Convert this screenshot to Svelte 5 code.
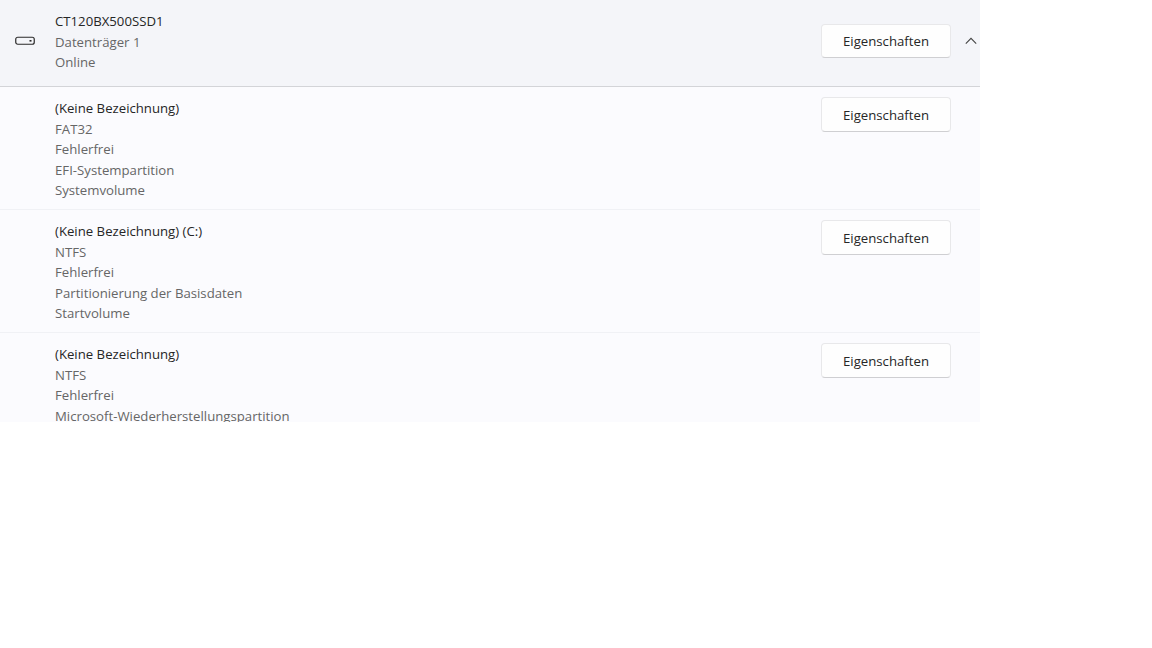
<script>
  const rows = [
    { title: '(Keine Bezeichnung)', lines: ['FAT32', 'Fehlerfrei', 'EFI-Systempartition', 'Systemvolume'] },
    { title: '(Keine Bezeichnung) (C:)', lines: ['NTFS', 'Fehlerfrei', 'Partitionierung der Basisdaten', 'Startvolume'] },
    { title: '(Keine Bezeichnung)', lines: ['NTFS', 'Fehlerfrei', 'Microsoft-Wiederherstellungspartition'] }
  ];
</script>

<div class="panel">
  <header class="head">
    <svg class="disk" width="20" height="10" viewBox="0 0 20 10" aria-hidden="true">
      <rect x="0.75" y="1.25" width="18.5" height="7" rx="2" fill="none" stroke="#2a2a2a" stroke-width="1.2" />
      <rect x="14.5" y="4" width="2" height="1.6" fill="#2a2a2a" />
    </svg>
    <div class="text">
      <div class="title">CT120BX500SSD1</div>
      <div class="sub">Datenträger 1</div>
      <div class="sub">Online</div>
    </div>
    <button class="btn">Eigenschaften</button>
    <svg class="chev" width="12" height="8" viewBox="0 0 12 8" aria-hidden="true">
      <path d="M0.8 6.6 L6 1.4 L11.2 6.6" fill="none" stroke="#444" stroke-width="1.1" />
    </svg>
  </header>
  {#each rows as r}
    <section class="row">
      <div class="text">
        <div class="title">{r.title}</div>
        {#each r.lines as l}
          <div class="sub">{l}</div>
        {/each}
      </div>
      <button class="btn">Eigenschaften</button>
    </section>
  {/each}
</div>

<style>
  :global(body) {
    margin: 0;
    background: #fff;
  }
  .panel {
    width: 980px;
    height: 422px;
    overflow: hidden;
    background: #fbfbfe;
    font-family: "Open Sans", "Noto Sans", sans-serif;
    font-size: 13.2px;
  }
  .head {
    height: 82px;
    box-sizing: content-box;
    display: flex;
    align-items: center;
    background: #f4f5f9;
    border-bottom: 1px solid #d3d4d8;
    padding: 0 0 4px 15px;
  }
  .head .text {
    margin-top: 2px;
  }
  .disk {
    width: 20px;
    margin-right: 20px;
    flex: none;
  }
  .text {
    flex: 1;
    min-width: 0;
  }
  .title {
    color: #262626;
    line-height: 20.5px;
  }
  .sub {
    color: #666;
    line-height: 20.5px;
  }
  .btn {
    width: 130px;
    height: 34px;
    flex: none;
    padding: 0 0 1px;
    box-sizing: border-box;
    background: #fefefe;
    border: 1px solid #e8e8ea;
    border-bottom-color: #cfcfd2;
    border-radius: 4px;
    color: #262626;
    font: inherit;
  }
  .chev {
    flex: none;
    margin-left: 14px;
    margin-right: 3px;
  }
  .row {
    height: 123px;
    display: flex;
    align-items: flex-start;
    padding: 11px 29px 0 55px;
    box-sizing: border-box;
    border-bottom: 1px solid #f0f1f5;
  }
  .row .btn {
    height: 35px;
    margin-top: -1px;
    padding: 0;
  }
</style>
